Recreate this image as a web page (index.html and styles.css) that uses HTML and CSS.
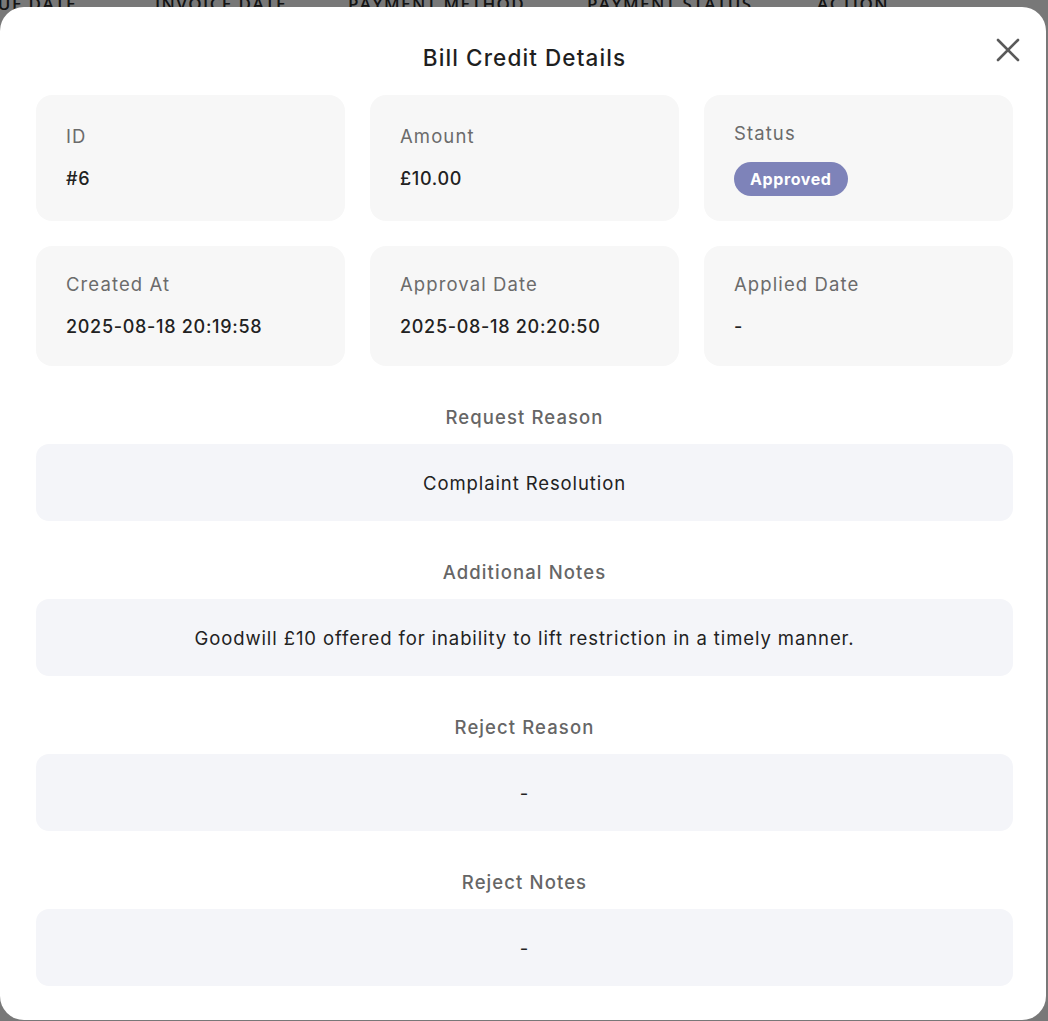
FILE: index.html
```html
<!DOCTYPE html>
<html lang="en">
<head>
<meta charset="utf-8">
<title>Bill Credit Details</title>
<link rel="stylesheet" href="styles.css">
</head>
<body>
<div class="page">
  <div class="table-head">
    <span class="th th-due">DUE DATE</span>
    <span class="th th-inv">INVOICE DATE</span>
    <span class="th th-pm">PAYMENT METHOD</span>
    <span class="th th-ps">PAYMENT STATUS</span>
    <span class="th th-act">ACTION</span>
  </div>
</div>
<div class="overlay"></div>
<div class="modal">
  <h2 class="title">Bill Credit Details</h2>
  <button class="close" aria-label="Close">
    <svg width="26" height="26" viewBox="0 0 26 26"><path d="M3 3 L23 23 M23 3 L3 23" stroke="#5a5a5a" stroke-width="2.6" stroke-linecap="round" fill="none"/></svg>
  </button>
  <div class="grid">
    <div class="card"><div class="label">ID</div><div class="value">#6</div></div>
    <div class="card"><div class="label">Amount</div><div class="value">£10.00</div></div>
    <div class="card"><div class="label">Status</div><div><span class="badge">Approved</span></div></div>
    <div class="card"><div class="label">Created At</div><div class="value">2025-08-18 20:19:58</div></div>
    <div class="card"><div class="label">Approval Date</div><div class="value">2025-08-18 20:20:50</div></div>
    <div class="card"><div class="label">Applied Date</div><div class="value">-</div></div>
  </div>
  <div class="sections">
    <div class="section"><div class="sec-label">Request Reason</div><div class="sec-box">Complaint Resolution</div></div>
    <div class="section"><div class="sec-label">Additional Notes</div><div class="sec-box">Goodwill £10 offered for inability to lift restriction in a timely manner.</div></div>
    <div class="section"><div class="sec-label">Reject Reason</div><div class="sec-box">-</div></div>
    <div class="section"><div class="sec-label">Reject Notes</div><div class="sec-box">-</div></div>
  </div>
</div>
</body>
</html>
```
FILE: styles.css
```css
* { box-sizing: border-box; }
html, body { margin: 0; padding: 0; }
body {
  width: 1048px;
  height: 1021px;
  overflow: hidden;
  background: #ffffff;
  font-family: Inter, "Open Sans", "Liberation Sans", sans-serif;
  position: relative;
}
.page { height: 1021px; }
.table-head {
  display: flex;
  height: 20px;
  margin-top: -6px;
  font-family: "Open Sans", "Liberation Sans", sans-serif;
  font-weight: 600;
  font-size: 17px;
  letter-spacing: 1.4px;
  color: #2b2b2b;
  line-height: 20px;
  white-space: nowrap;
}
.th-due { margin-left: -16px; width: 171px; }
.th-inv { width: 193px; }
.th-pm { width: 239px; }
.th-ps { width: 230px; }
.overlay {
  position: absolute;
  inset: 0;
  background: rgba(0,0,0,0.53);
}
.modal {
  position: absolute;
  left: 0;
  top: 7px;
  width: 1046px;
  height: 1013px;
  background: #ffffff;
  border-radius: 24px;
  padding: 34px 33px 0 36px;
}
.title {
  margin: 0;
  text-align: center;
  font-size: 22.5px;
  letter-spacing: 1.1px;
  line-height: 33px;
  font-weight: 500;
  color: #1f1f1f;
}
.close {
  position: absolute;
  top: 30px;
  left: 995px;
  width: 26px;
  height: 26px;
  padding: 0;
  border: 0;
  background: none;
}
.close svg { display: block; }
.grid {
  margin-top: 21px;
  display: grid;
  grid-template-columns: repeat(3, 1fr);
  gap: 25px;
}
.card {
  background: #f7f7f7;
  border-radius: 16px;
  padding: 25px 30px;
  display: flex;
  flex-direction: column;
  justify-content: center;
  gap: 15px;
}
.label {
  font-size: 18.5px;
  letter-spacing: 1.1px;
  line-height: 27px;
  color: #6b6b6b;
}
.value {
  font-size: 18px;
  letter-spacing: 0.7px;
  line-height: 28px;
  font-weight: 500;
  color: #222222;
}
.badge {
  display: inline-block;
  height: 34px;
  line-height: 34px;
  padding: 0 16px;
  border-radius: 17px;
  background: #7e83b9;
  color: #ffffff;
  font-size: 16px;
  letter-spacing: 0.6px;
  font-weight: 700;
}
.sections {
  margin-top: 38px;
  display: flex;
  flex-direction: column;
  gap: 38px;
}
.section { display: flex; flex-direction: column; gap: 13px; }
.sec-label {
  text-align: center;
  font-size: 18.5px;
  letter-spacing: 1.1px;
  line-height: 27px;
  font-weight: 500;
  color: #666666;
}
.sec-box {
  height: 77px;
  background: #f4f5f9;
  border-radius: 13px;
  display: flex;
  align-items: center;
  justify-content: center;
  font-size: 18.5px;
  letter-spacing: 0.9px;
  color: #222222;
}
```
